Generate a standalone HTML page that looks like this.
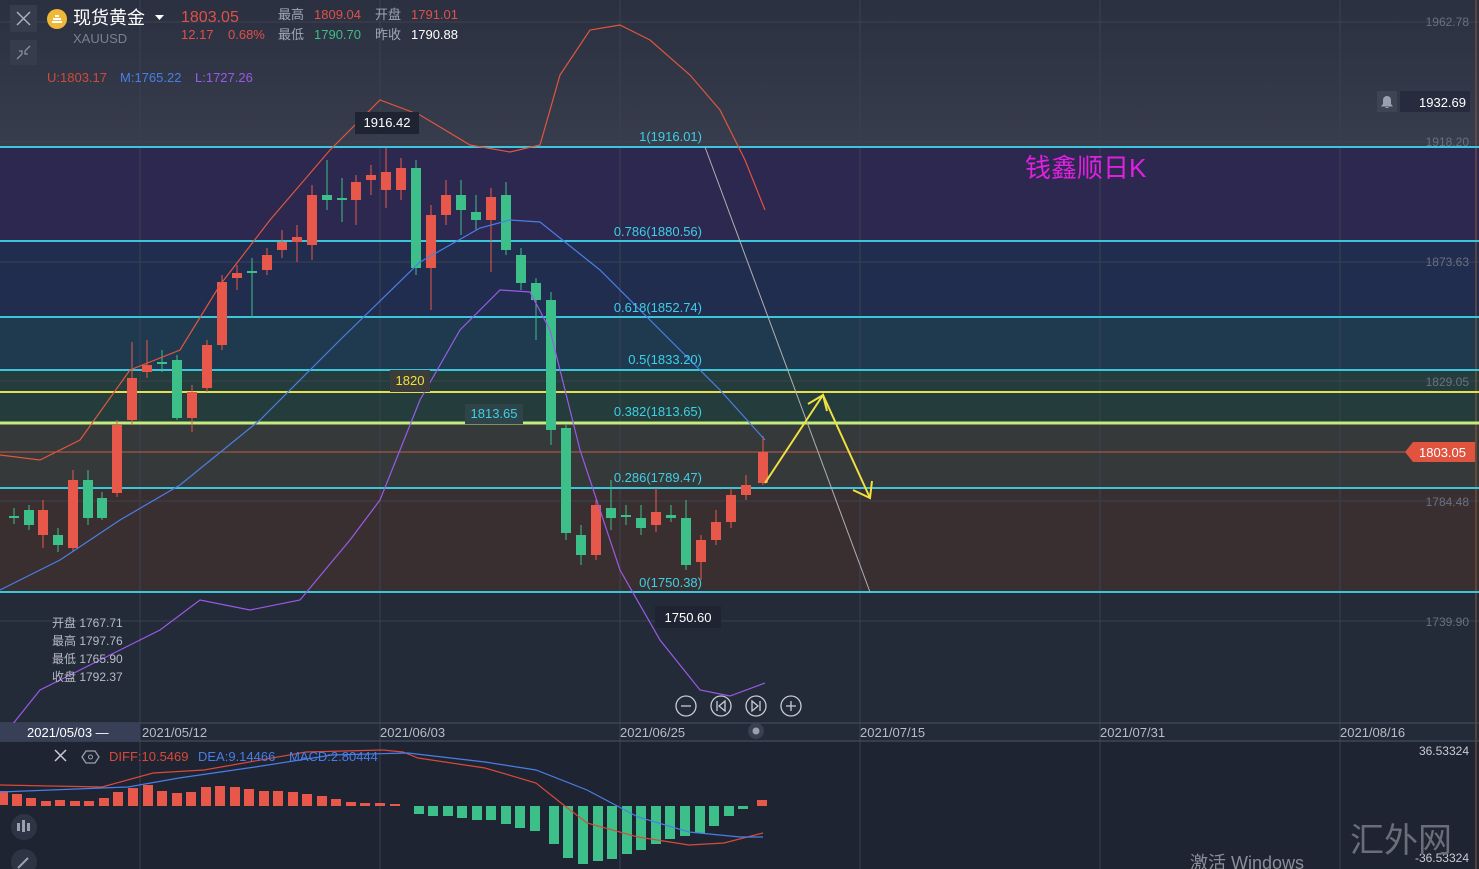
<!DOCTYPE html>
<html><head><meta charset="utf-8"><style>
html,body{margin:0;padding:0;background:#232a38;}
body{width:1479px;height:869px;overflow:hidden;position:relative;font-family:"Liberation Sans","Noto Sans CJK SC",sans-serif;}
svg{position:absolute;left:0;top:0}
svg text{font-family:"Liberation Sans","Noto Sans CJK SC",sans-serif}
</style></head><body>
<svg id="s" width="1479" height="869" viewBox="0 0 1479 869">
<defs><linearGradient id="tg" x1="0" y1="0" x2="0" y2="1"><stop offset="0" stop-color="#2a3040"/><stop offset="1" stop-color="#383d4d"/></linearGradient></defs>
<rect x="0" y="0" width="1479" height="147" fill="url(#tg)"/>
<rect x="0" y="147" width="1479" height="94" fill="#2c2850"/>
<rect x="0" y="241" width="1479" height="76" fill="#212d4f"/>
<rect x="0" y="317" width="1479" height="53" fill="#1f3a4f"/>
<rect x="0" y="370" width="1479" height="53" fill="#243d3c"/>
<rect x="0" y="423" width="1479" height="65" fill="#36393a"/>
<rect x="0" y="488" width="1479" height="104" fill="#3a2f30"/>
<rect x="0" y="592" width="1479" height="150" fill="#232a38"/>
<rect x="0" y="742" width="1479" height="127" fill="#1e2432"/>
<g stroke="#3a4152" stroke-width="1">
<line x1="140" y1="0" x2="140" y2="869"/><line x1="380" y1="0" x2="380" y2="869"/><line x1="620" y1="0" x2="620" y2="869"/><line x1="860" y1="0" x2="860" y2="869"/><line x1="1100" y1="0" x2="1100" y2="869"/><line x1="1340" y1="0" x2="1340" y2="869"/>
<line x1="0" y1="22" x2="1479" y2="22"/><line x1="0" y1="142" x2="1479" y2="142"/><line x1="0" y1="262" x2="1479" y2="262"/><line x1="0" y1="381" x2="1479" y2="381"/><line x1="0" y1="501" x2="1479" y2="501"/><line x1="0" y1="621" x2="1479" y2="621"/>
</g>
<line x1="1476" y1="0" x2="1476" y2="869" stroke="#8a5a3a"/>
<line x1="0" y1="723" x2="1479" y2="723" stroke="#4a5060"/>
<line x1="0" y1="741" x2="1479" y2="741" stroke="#4a5060"/>
<g stroke-width="2">
<line x1="0" y1="147" x2="1479" y2="147" stroke="#3cc6dc"/>
<line x1="0" y1="241" x2="1479" y2="241" stroke="#3cc6dc"/>
<line x1="0" y1="317" x2="1479" y2="317" stroke="#3cc6dc"/>
<line x1="0" y1="370" x2="1479" y2="370" stroke="#3cc6dc"/>
<line x1="0" y1="392" x2="1479" y2="392" stroke="#e4e050"/>
<line x1="0" y1="423" x2="1479" y2="423" stroke="#c4ec7c" stroke-width="3"/>
<line x1="0" y1="488" x2="1479" y2="488" stroke="#3cc6dc"/>
<line x1="0" y1="592" x2="1479" y2="592" stroke="#3cc6dc"/>
</g>
<line x1="0" y1="452" x2="1410" y2="452" stroke="#c05a48" stroke-width="1"/>
<line x1="705" y1="147" x2="870" y2="592" stroke="#b0b0b0" stroke-width="1"/>
<g id="candles"></g>
<polyline fill="none" stroke="#e0553e" stroke-width="1.2" points="0,455 40,460 80,440 130,370 180,350 220,285 270,220 330,150 380,100 420,115 470,145 510,152 540,145 560,75 590,30 620,25 650,40 690,75 720,110 745,160 765,210"/>
<polyline fill="none" stroke="#4a7ee6" stroke-width="1.2" points="0,590 60,560 120,520 180,485 260,420 340,340 420,262 480,228 510,220 540,222 600,270 660,330 720,390 765,440"/>
<polyline fill="none" stroke="#9a5ae6" stroke-width="1.2" points="0,740 40,690 100,660 160,630 200,600 250,610 300,600 350,540 380,500 420,400 460,330 500,290 530,292 550,330 580,450 620,570 660,640 700,690 730,696 765,683"/>
<polyline fill="none" stroke="#f0e040" stroke-width="2" points="765,483 823,395 870,498"/>
<polyline fill="none" stroke="#f0e040" stroke-width="2" points="808,404 823,395 827,411"/>
<polyline fill="none" stroke="#f0e040" stroke-width="2" points="853,490 870,498 872,481"/>
<g font-size="13" fill="#3cd0e6" text-anchor="end">
<text x="702" y="141">1(1916.01)</text><text x="702" y="236">0.786(1880.56)</text><text x="702" y="312">0.618(1852.74)</text><text x="702" y="364">0.5(1833.20)</text><text x="702" y="416">0.382(1813.65)</text><text x="702" y="482">0.286(1789.47)</text><text x="702" y="587">0(1750.38)</text>
</g>
<rect x="355" y="112" width="64" height="22" fill="#1e2432"/><text x="387" y="127" font-size="13" fill="#fff" text-anchor="middle">1916.42</text>
<rect x="655" y="606" width="66" height="22" fill="#1e2432"/><text x="688" y="622" font-size="13" fill="#fff" text-anchor="middle">1750.60</text>
<rect x="390" y="370" width="40" height="22" fill="#3a3d3a"/><text x="410" y="385" font-size="13" fill="#f0e040" text-anchor="middle">1820</text>
<rect x="465" y="404" width="58" height="20" fill="#2e4448"/><text x="494" y="418" font-size="13" fill="#3cd0e6" text-anchor="middle">1813.65</text>
<text x="1025" y="177" font-size="26" fill="#e020e0">钱鑫顺日K</text>
<g font-size="12" fill="#6a7080" text-anchor="end"><text x="1469" y="26">1962.78</text><text x="1469" y="146">1918.20</text><text x="1469" y="266">1873.63</text><text x="1469" y="386">1829.05</text><text x="1469" y="506">1784.48</text><text x="1469" y="626">1739.90</text></g>
<rect x="1377" y="91" width="20" height="21" fill="#3e4454"/><path d="M1382 106h10l-1.5-2v-4a3.5 3.5 0 0 0-7 0v4z M1385.5 107.5h3" fill="#9aa0ae" stroke="#9aa0ae"/>
<rect x="1400" y="91" width="70" height="21" fill="#262c3e"/><text x="1466" y="107" font-size="13" fill="#fff" text-anchor="end">1932.69</text>
<path d="M1405 452l8-10h62v20h-62z" fill="#e0533f"/><text x="1466" y="457" font-size="13" fill="#fff" text-anchor="end">1803.05</text>
<g font-size="12" fill="#b8bcc6"><text x="52" y="627">开盘 1767.71</text><text x="52" y="645">最高 1797.76</text><text x="52" y="663">最低 1765.90</text><text x="52" y="681">收盘 1792.37</text></g>
<g fill="none" stroke="#c8ccd4" stroke-width="1.3">
<circle cx="686" cy="706" r="10"/><line x1="681" y1="706" x2="691" y2="706"/>
<circle cx="721" cy="706" r="10"/><path d="M717 701v10M725 701l-6 5 6 5z"/>
<circle cx="756" cy="706" r="10"/><path d="M760 701v10M752 701l6 5-6 5z"/>
<circle cx="791" cy="706" r="10"/><path d="M786 706h10M791 701v10"/>
</g>
<rect x="0" y="723" width="140" height="18" fill="#384058"/>
<g font-size="13" fill="#b8bcc6"><text x="27" y="737" fill="#fff">2021/05/03 —</text><text x="142" y="737">2021/05/12</text><text x="380" y="737">2021/06/03</text><text x="620" y="737">2021/06/25</text><text x="860" y="737">2021/07/15</text><text x="1100" y="737">2021/07/31</text><text x="1340" y="737">2021/08/16</text></g>
<circle cx="756" cy="731" r="8" fill="#3a4052"/><circle cx="756" cy="731" r="3.5" fill="#9aa0ae"/>
<g id="macd"></g>
<polyline fill="none" stroke="#d84a3a" stroke-width="1.2" points="0,785 102,787 153,773 204,770 306,752 383,750 403,752 418,758 485,768 536,783 561,803 587,823 638,837 689,845 724,843 763,833"/>
<polyline fill="none" stroke="#4a7ee6" stroke-width="1.2" points="0,792 102,788 128,787 179,778 255,767 332,755 408,753 485,762 536,770 587,790 638,817 689,832 740,837 763,837"/>
<g stroke="#c8ccd4" stroke-width="1.5"><path d="M55 750l11 11M66 750l-11 11"/></g>
<polygon points="86,751 95,751 99,757 95,763 86,763 82,757" fill="none" stroke="#9aa0ae" stroke-width="1.3"/><circle cx="90.5" cy="757" r="2" fill="none" stroke="#9aa0ae"/>
<text x="109" y="761" font-size="13" fill="#d84a3a">DIFF:10.5469</text><text x="198" y="761" font-size="13" fill="#4a7ee6">DEA:9.14466</text><text x="289" y="761" font-size="13" fill="#4a7ee6">MACD:2.80444</text>
<text x="1469" y="755" font-size="12" fill="#c8ccd4" text-anchor="end">36.53324</text>
<text x="1469" y="862" font-size="12" fill="#c8ccd4" text-anchor="end">-36.53324</text>
<text x="1350" y="852" font-size="34" fill="#6a6e78" font-family="Liberation Serif,Noto Serif CJK SC,serif">汇外网</text>
<text x="1190" y="869" font-size="18" fill="#8a8e98">激活 Windows</text>
<circle cx="24" cy="827" r="13" fill="#2e3444"/><g fill="#9aa0ae"><rect x="17" y="823" width="3" height="8"/><rect x="22" y="820" width="3" height="12"/><rect x="27" y="823" width="3" height="8"/></g>
<circle cx="24" cy="862" r="13" fill="#2e3444"/><path d="M18 868l10-10" stroke="#9aa0ae" stroke-width="2"/>
<rect x="10" y="5" width="27" height="27" fill="#363c4c"/><path d="M17 12l13 13M30 12l-13 13" stroke="#aab0bc" stroke-width="1.5"/>
<rect x="10" y="40" width="27" height="25" fill="#363c4c"/><path d="M17 59l5-5M30 46l-5 5M22 54v-3h-3M25 51v3h3" stroke="#8a909c" stroke-width="1.3" fill="none"/>
<circle cx="57" cy="19" r="10" fill="#f0b838"/><path d="M52 22h10M53 19h8M55 16h4" stroke="#fff" stroke-width="2"/>
<text x="73" y="24" font-size="18" fill="#fff">现货黄金</text><path d="M155 15h9l-4.5 5z" fill="#fff"/>
<text x="73" y="43" font-size="13" fill="#7a8090">XAUUSD</text>
<text x="181" y="22" font-size="16" fill="#e0504a">1803.05</text>
<text x="181" y="39" font-size="13" fill="#e0504a">12.17</text><text x="228" y="39" font-size="13" fill="#e0504a">0.68%</text>
<g font-size="13"><text x="278" y="19" fill="#a0a6b2">最高</text><text x="314" y="19" fill="#e0504a">1809.04</text><text x="375" y="19" fill="#a0a6b2">开盘</text><text x="411" y="19" fill="#e0504a">1791.01</text>
<text x="278" y="39" fill="#a0a6b2">最低</text><text x="314" y="39" fill="#3cbf88">1790.70</text><text x="375" y="39" fill="#a0a6b2">昨收</text><text x="411" y="39" fill="#fff">1790.88</text></g>
<g font-size="13"><text x="47" y="82" fill="#d04a3a">U:1803.17</text><text x="120" y="82" fill="#4a7ee6">M:1765.22</text><text x="195" y="82" fill="#9a5ae6">L:1727.26</text></g>
</svg>
<script>
var R="#e8584a",G="#3cbf88";
var c=[[14,516,518,508,524],[29,510,525,505,530],[43,535,510,500,548],[58,535,545,528,552],[73,548,480,470,552],[88,480,518,470,525],[102,498,518,492,520],[117,493,425,420,497],[132,420,378,342,425],[147,372,365,340,378],[162,362,364,350,372],[177,360,418,355,420],[192,418,392,385,432],[207,388,345,340,392],[222,345,282,275,350],[237,278,273,265,290],[252,271,273,258,318],[267,270,255,248,275],[282,250,242,230,258],[297,242,237,225,262],[312,245,195,185,260],[327,195,200,160,210],[342,198,199,178,222],[356,200,182,175,225],[371,180,175,165,195],[386,190,172,148,208],[401,190,168,158,200],[416,168,268,160,275],[431,268,215,205,310],[446,215,195,180,225],[461,195,210,180,235],[476,212,220,195,230],[491,220,197,188,272],[506,195,250,182,255],[521,255,283,248,290],[536,283,300,278,340],[551,300,430,292,445],[566,428,533,425,540],[581,535,555,525,565],[596,555,505,500,560],[611,508,518,480,530],[626,515,516,505,525],[641,518,528,505,535],[656,525,512,488,532],[671,515,518,505,522],[686,518,565,500,570],[701,562,540,535,580],[716,540,522,510,545],[731,522,495,488,528],[746,495,485,475,500],[763,483,452,436,485]];
var g=document.getElementById("candles"),h="";
c.forEach(function(a){var col=a[2]<a[1]?R:G;var t=Math.min(a[1],a[2]),b=Math.max(a[1],a[2]);if(b-t<2)b=t+2;
h+='<line x1="'+a[0]+'" y1="'+a[3]+'" x2="'+a[0]+'" y2="'+a[4]+'" stroke="'+col+'"/><rect x="'+(a[0]-5)+'" y="'+t+'" width="10" height="'+(b-t)+'" fill="'+col+'"/>';});
g.innerHTML=h;
var m=[[3,805,14],[17,806,12],[31,806,8],[46,806,5],[60,806,6],[75,806,5],[89,806,5],[104,806,8],[118,806,14],[133,806,18],[148,806,21],[162,806,15],[177,806,13],[191,806,14],[206,806,19],[220,806,20],[235,806,19],[249,806,17],[264,806,15],[278,806,15],[293,806,14],[307,806,12],[322,806,10],[336,806,7],[351,806,4],[365,806,3],[380,806,3],[395,806,2],[419,806,-8],[433,806,-10],[448,806,-10],[462,806,-12],[477,806,-14],[491,806,-14],[506,806,-18],[520,806,-22],[535,806,-25],[554,806,-38],[568,806,-52],[583,806,-58],[598,806,-55],[612,806,-53],[627,806,-48],[641,806,-44],[656,806,-38],[670,806,-33],[685,806,-30],[700,806,-27],[714,806,-20],[729,806,-10],[743,806,-3],[762,806,6]];
var mh="";m.forEach(function(a){var y=a[2]>0?a[1]-a[2]:a[1];mh+='<rect x="'+(a[0]-5)+'" y="'+y+'" width="10" height="'+Math.abs(a[2])+'" fill="'+(a[2]>0?R:G)+'"/>';});
document.getElementById("macd").innerHTML=mh;
</script>
</body></html>
